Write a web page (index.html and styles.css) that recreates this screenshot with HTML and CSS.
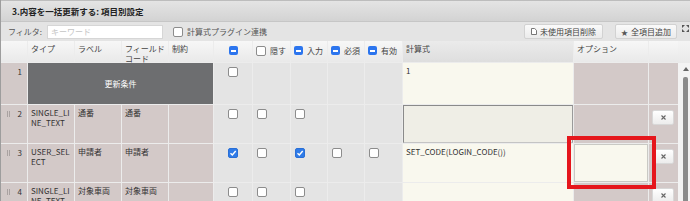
FILE: index.html
```html
<!DOCTYPE html>
<html lang="ja">
<head>
<meta charset="utf-8">
<link rel="stylesheet" href="styles.css">
</head>
<body>
<div class="panel">
  <div class="title">3.内容を一括更新する: 項目別設定</div>
  <div class="filter">
    <span class="flabel">フィルタ:</span>
    <div class="kw">キーワード</div>
    <span class="cb plugcb"></span>
    <span class="pluglabel">計算式プラグイン連携</span>
    <div class="spacer"></div>
    <div class="btn btn1"><svg class="docic" width="6" height="7" viewBox="0 0 6 7"><path d="M0.5 0.5h3.2l1.8 1.8v4.2h-5z" fill="#fff" stroke="#777" stroke-width="1"/></svg><span>未使用項目削除</span></div>
    <div class="btn btn2"><span class="star">★</span><span>全項目追加</span></div>
    <svg class="expand" width="7" height="7" viewBox="0 0 7 7"><path d="M0 0h3L0 3zM7 0v3L4 0zM0 7V4l3 3zM7 7H4l3-3z" fill="#555"/></svg>
  </div>
  <div class="gridwrap">
    <div class="grid">
      <!-- header -->
      <div class="h"></div>
      <div class="h">タイプ</div>
      <div class="h">ラベル</div>
      <div class="h">フィールド<br>コード</div>
      <div class="h">制約</div>
      <div class="h hc"><span class="mi"></span></div>
      <div class="h hl"><span class="cb"></span><span>隠す</span></div>
      <div class="h hl"><span class="mi"></span><span>入力</span></div>
      <div class="h hl"><span class="mi"></span><span>必須</span></div>
      <div class="h hl"><span class="mi"></span><span>有効</span></div>
      <div class="h hcalc">計算式</div>
      <div class="h">オプション</div>
      <div class="h"></div>

      <!-- row 1 -->
      <div class="num"><span></span><span>1</span></div>
      <div class="dark">更新条件</div>
      <div class="ck cc"><span class="cb"></span></div>
      <div class="ck"></div>
      <div class="ck"></div>
      <div class="ck"></div>
      <div class="ck"></div>
      <div class="calc lat">1</div>
      <div class="pk"></div>
      <div class="pk"></div>

      <!-- row 2 -->
      <div class="num"><span class="grip"></span><span>2</span></div>
      <div class="pk lat">SINGLE_LI<br>NE_TEXT</div>
      <div class="pk">通番</div>
      <div class="pk">通番</div>
      <div class="pk"></div>
      <div class="ck cc"><span class="cb"></span></div>
      <div class="ck"><span class="cb"></span></div>
      <div class="ck"><span class="cb"></span></div>
      <div class="ck"></div>
      <div class="ck"></div>
      <div class="calc ta"></div>
      <div class="pk"></div>
      <div class="pk del"><span class="dbtn"><svg width="5" height="5" viewBox="0 0 5 5"><path d="M0.5 0.5l4 4M4.5 0.5l-4 4" stroke="#666" stroke-width="1.1"/></svg></span></div>

      <!-- row 3 -->
      <div class="num"><span class="grip"></span><span>3</span></div>
      <div class="pk lat">USER_SEL<br>ECT</div>
      <div class="pk">申請者</div>
      <div class="pk">申請者</div>
      <div class="pk"></div>
      <div class="ck cc"><span class="cb on"><svg width="8" height="8" viewBox="0 0 8 8"><path d="M1.5 4.2l1.8 1.8 3.4-4" fill="none" stroke="#fff" stroke-width="1.4"/></svg></span></div>
      <div class="ck"><span class="cb"></span></div>
      <div class="ck"><span class="cb on"><svg width="8" height="8" viewBox="0 0 8 8"><path d="M1.5 4.2l1.8 1.8 3.4-4" fill="none" stroke="#fff" stroke-width="1.4"/></svg></span></div>
      <div class="ck"><span class="cb"></span></div>
      <div class="ck"><span class="cb"></span></div>
      <div class="calc lat">SET_CODE(LOGIN_CODE())</div>
      <div class="opt"></div>
      <div class="pk del"><span class="dbtn"><svg width="5" height="5" viewBox="0 0 5 5"><path d="M0.5 0.5l4 4M4.5 0.5l-4 4" stroke="#666" stroke-width="1.1"/></svg></span></div>

      <!-- row 4 -->
      <div class="num"><span class="grip"></span><span>4</span></div>
      <div class="pk lat">SINGLE_LI<br>NE_TEXT</div>
      <div class="pk">対象車両</div>
      <div class="pk">対象車両</div>
      <div class="pk"></div>
      <div class="ck cc"><span class="cb"></span></div>
      <div class="ck"><span class="cb"></span></div>
      <div class="ck"><span class="cb"></span></div>
      <div class="ck"></div>
      <div class="ck"></div>
      <div class="calc"></div>
      <div class="pk"></div>
      <div class="pk del"><span class="dbtn"><svg width="5" height="5" viewBox="0 0 5 5"><path d="M0.5 0.5l4 4M4.5 0.5l-4 4" stroke="#666" stroke-width="1.1"/></svg></span></div>
    </div>
    <div class="vscroll">
      <div class="vs-head"></div>
      <div class="vs-track">
        <svg class="vs-up" width="6" height="4" viewBox="0 0 6 4"><path d="M0 4L3 0l3 4z" fill="#666"/></svg>
        <div class="vs-thumb"></div>
      </div>
    </div>
  </div>
  <div class="redbox"></div>
</div>
</body>
</html>
```

FILE: styles.css
```css
* { box-sizing: border-box; }
html, body { margin: 0; padding: 0; }
body {
  width: 690px;
  height: 201px;
  overflow: hidden;
  background: #ffffff;
  font-family: "Noto Sans CJK JP", "Noto Sans", sans-serif;
  font-size: 8px;
  color: #333333;
}
.panel {
  position: relative;
  width: 690px;
  height: 201px;
  border-left: 1px solid #9d9d9d;
  overflow: hidden;
}
.title {
  height: 22px;
  padding-left: 11px;
  display: flex;
  align-items: center;
  font-weight: bold;
  font-size: 8.5px;
  color: #222222;
  background: linear-gradient(#e4e4e4, #d3d3d3);
  border-top: 1px solid #bdbdbd;
  border-bottom: 1px solid #c6c6c6;
}
.filter {
  height: 19px;
  display: flex;
  align-items: center;
  padding-left: 7px;
  background: #e4e4e4;
  color: #555555;
}
.flabel { width: 39px; }
.kw {
  width: 116px;
  height: 14px;
  background: #ffffff;
  border: 1px solid #d6d6d6;
  color: #c4c4c4;
  padding-left: 3px;
  line-height: 12px;
}
.plugcb { margin-left: 10px; }
.pluglabel { margin-left: 4px; }
.spacer { flex: 1; }
.btn {
  height: 15px;
  display: flex;
  align-items: center;
  justify-content: center;
  gap: 3px;
  background: linear-gradient(#fafafa, #ebebeb);
  border: 1px solid #d2d2d2;
  border-radius: 2px;
  color: #444444;
}
.btn1 { width: 79px; }
.btn2 { width: 62px; margin-left: 12px; }
.star { font-size: 7px; color: #555555; }
.docic { display: block; }
.expand { margin: 0 1px 6px 5px; }

.gridwrap { display: flex; }
.grid {
  display: grid;
  grid-template-columns: 26px 46px 46px 46px 44px 38px 37px 36px 36px 37px 170px 74px 29px;
  grid-template-rows: 21px 41px 38px 38px 38px;
  gap: 1px;
  width: 677px;
  background: #ececec;
}
.h {
  background: linear-gradient(#f7f7f7, #e9e9e9);
  padding: 3px 3px 0 3px;
  line-height: 10px;
  color: #444444;
}
.hc { display: flex; justify-content: center; padding-top: 5px; }
.hl { display: flex; gap: 4px; padding: 5px 3px 0 3px; align-items: flex-start; }
.hl span:last-child { line-height: 9px; }
.hcalc { background: linear-gradient(#ebebeb, #dedede); }

.num {
  background: #d2c9c8;
  display: flex;
  justify-content: space-between;
  padding: 4px 5px 0 6px;
  line-height: 10px;
}
.grip {
  width: 3px;
  height: 6px;
  margin-top: 2px;
  border-left: 1px solid #a9a2a1;
  border-right: 1px solid #a9a2a1;
}
.dark {
  grid-column: 2 / 6;
  background: #6d6e70;
  color: #ffffff;
  display: flex;
  align-items: center;
  justify-content: center;
}
.pk {
  background: #d3c9c8;
  padding: 3px 2px 0 3px;
  line-height: 10px;
  overflow: hidden;
}
.lat { font-size: 8px; line-height: 10px; white-space: nowrap; }
.ck {
  background: #e4e4e4;
  padding: 4px 0 0 4px;
  display: flex;
  align-items: flex-start;
}
.cc { justify-content: center; padding-left: 0; }
.calc {
  background: #f9f8ee;
  padding: 3px 3px 0 3px;
  color: #333333;
}
.ta {
  background: #efeee6;
  border: 1px solid #8a8a8a;
  border-right-color: #9a9a9a;
  border-bottom-color: #c4c4c4;
}
.opt {
  background: #f9f8ee;
  border: 1px solid #c9c9c4;
}
.del { padding: 5px 0 0 3px; }
.dbtn {
  width: 22px;
  height: 15px;
  display: flex;
  align-items: center;
  justify-content: center;
  background: linear-gradient(#ffffff, #ececec);
  border: 1px solid #d8d8d8;
  border-radius: 2px;
}
.dbtn svg { display: block; }

.cb {
  width: 10px;
  height: 10px;
  border: 1px solid #8c8c8c;
  border-radius: 2px;
  background: #ffffff;
  display: inline-flex;
  align-items: center;
  justify-content: center;
  flex: none;
}
.cb.on { background: #2f7be8; border-color: #2a6fd6; }
.cb svg { display: block; }
.mi {
  width: 9px;
  height: 9px;
  border-radius: 2px;
  background: #2c75ee;
  display: inline-flex;
  align-items: center;
  justify-content: center;
  flex: none;
}
.mi::after {
  content: "";
  width: 5px;
  height: 2px;
  background: #ffffff;
}

.vscroll { width: 12px; display: flex; flex-direction: column; }
.vs-head { height: 22px; background: linear-gradient(#f4f4f4, #e9e9e9); }
.vs-track {
  flex: 1;
  background: #f3f3f3;
  display: flex;
  flex-direction: column;
  align-items: center;
  padding: 4px 0 0 3px;
}
.vs-up { display: block; }
.vs-thumb {
  margin-top: 6px;
  width: 5px;
  flex: 1;
  background: #8b8b8b;
  border-radius: 2px 2px 0 0;
}

.redbox {
  position: absolute;
  left: 566px;
  top: 136px;
  width: 89px;
  height: 53px;
  border: 4px solid #e5161c;
}
```
